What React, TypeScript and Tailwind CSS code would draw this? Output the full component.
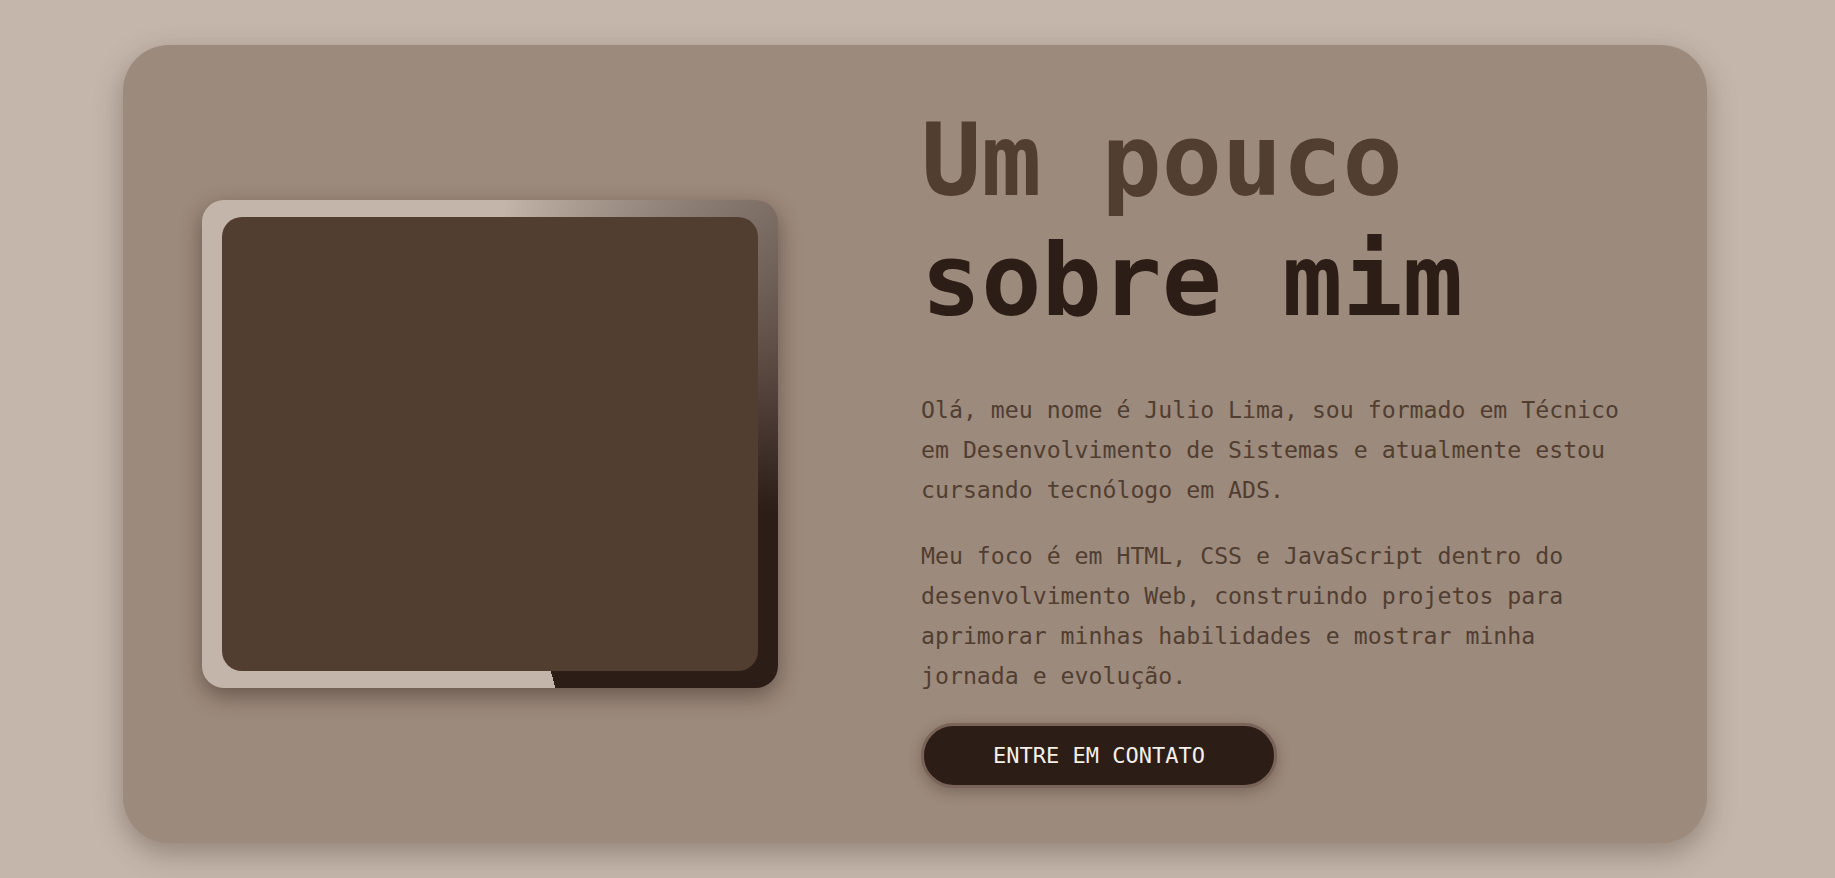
export default function App() {
  return (
    <main className="min-h-screen bg-[#c4b6ab] pt-[45px] pb-[35px] pl-[123px] pr-[128px] font-['DejaVu_Sans_Mono','Liberation_Mono',monospace]">
      <section className="flex h-[798px] items-center rounded-[46px] bg-[#9c8a7c] pl-[79px] shadow-[0_10px_28px_rgba(60,40,30,0.35)]">
        {/* Photo */}
        <div className="shrink-0 rounded-[22px] bg-[conic-gradient(from_165deg,#c4b5aa_0%,#c4b5aa_55%,#2d1d17_83%,#2d1d17_100%)] px-5 py-[17px] shadow-[0_8px_22px_rgba(40,25,18,0.45)]">
          <div className="h-[454px] w-[536px] rounded-[20px] bg-[#513e31]" />
        </div>

        {/* About text */}
        <div className="ml-[143px] flex flex-col items-start">
          <h1 className="text-[100px] font-bold leading-[120px]">
            <span className="block text-[#513e31]">Um pouco</span>
            <span className="block text-[#2d1d17]">sobre mim</span>
          </h1>
          <p className="mt-[49px] max-w-[710px] text-[23.2px] leading-[40px] text-[#513e31]">
            Olá, meu nome é Julio Lima, sou formado em Técnico em Desenvolvimento de Sistemas e atualmente estou cursando tecnólogo em ADS.
          </p>
          <p className="mt-[26px] max-w-[710px] text-[23.2px] leading-[40px] text-[#513e31]">
            Meu foco é em HTML, CSS e JavaScript dentro do desenvolvimento Web, construindo projetos para aprimorar minhas habilidades e mostrar minha jornada e evolução.
          </p>
          <button className="mt-[27px] rounded-full border-[3px] border-[#7a6358] bg-[#2d1d17] px-[69px] py-[17px] text-[22px] leading-[25px] text-[#f5efe9] shadow-[0_4px_14px_rgba(40,25,18,0.3)]">
            ENTRE EM CONTATO
          </button>
        </div>
      </section>
    </main>
  );
}
